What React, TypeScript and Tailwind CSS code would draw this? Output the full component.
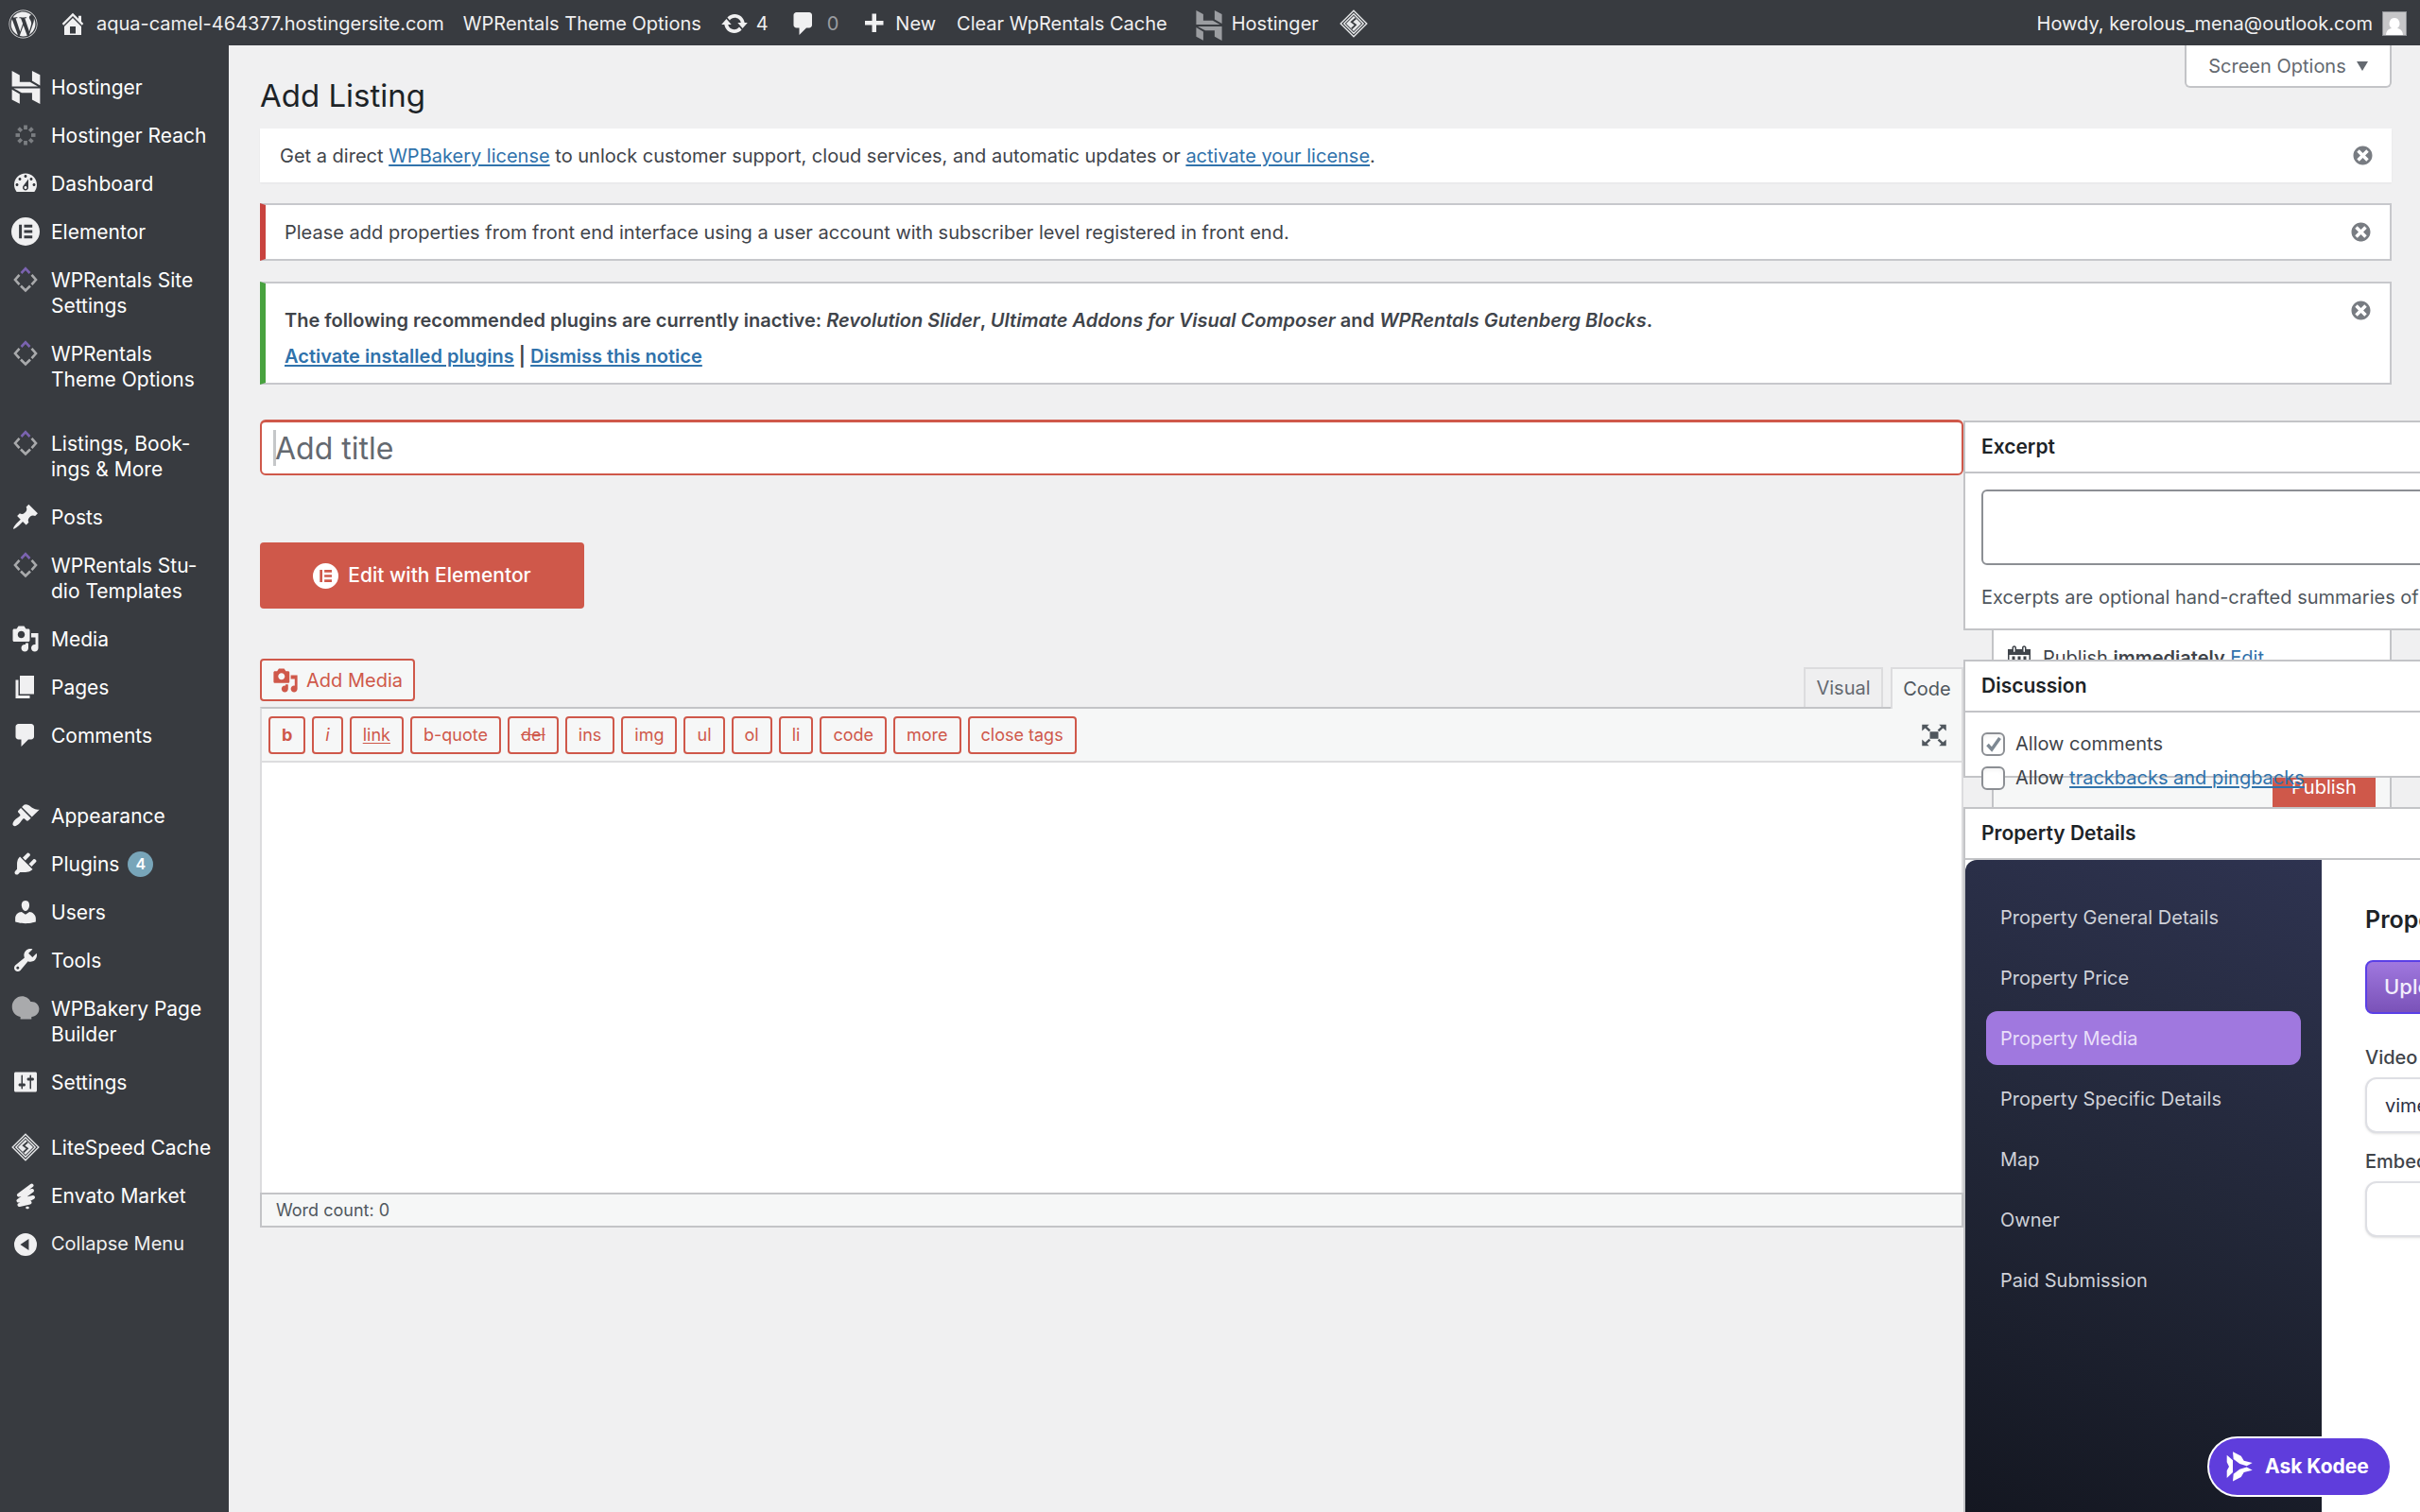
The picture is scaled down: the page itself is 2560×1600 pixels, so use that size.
import type { ReactNode } from "react";
import { FaWordpress } from "react-icons/fa";

// 20x20 admin icon set
const icons = {
  home: "M16 8.5l1.53 1.53-1.06 1.06L10 4.6l-6.47 6.49-1.06-1.06L10 2.5l4 4v-2h2v4zm-6-2.46l6 5.99V18H4v-5.97zM12 17v-5H8v5h4z",
  update:
    "M10.2 3.28c3.53 0 6.43 2.61 6.92 6h2.08l-3.5 4-3.5-4h2.32c-.45-1.97-2.21-3.45-4.32-3.45-1.45 0-2.73.71-3.54 1.78L4.95 5.66C6.23 4.2 8.11 3.28 10.2 3.28zm-.4 13.44c-3.52 0-6.43-2.61-6.92-6H.8l3.5-4c1.17 1.33 2.33 2.67 3.5 4H5.48c.45 1.97 2.21 3.45 4.32 3.45 1.45 0 2.73-.71 3.54-1.78l1.71 1.95c-1.28 1.46-3.15 2.38-5.25 2.38z",
  comments: "M5 2h9c1.1 0 2 .9 2 2v7c0 1.1-.9 2-2 2h-2l-5 5v-5H5c-1.1 0-2-.9-2-2V4c0-1.1.9-2 2-2z",
  plus: "M17 8v3h-5v5H9v-5H4V8h5V3h3v5h5z",
  dashboard:
    "M3.76 16h12.48c1.1-1.37 1.76-3.11 1.76-5 0-4.42-3.58-8-8-8s-8 3.58-8 8c0 1.89.66 3.63 1.76 5zM10 4c.55 0 1 .45 1 1s-.45 1-1 1-1-.45-1-1 .45-1 1-1zM6 6c.55 0 1 .45 1 1s-.45 1-1 1-1-.45-1-1 .45-1 1-1zm8 0c.55 0 1 .45 1 1s-.45 1-1 1-1-.45-1-1 .45-1 1-1zm-5.37 5.55L12 7v6c0 1.1-.9 2-2 2s-2-.9-2-2c0-.57.24-1.08.63-1.45zM4 10c.55 0 1 .45 1 1s-.45 1-1 1-1-.45-1-1 .45-1 1-1zm12 0c.55 0 1 .45 1 1s-.45 1-1 1-1-.45-1-1 .45-1 1-1zm-5 3c0-.55-.45-1-1-1s-1 .45-1 1 .45 1 1 1 1-.45 1-1z",
  post: "M10.44 3.02l1.82-1.82 6.36 6.35-1.83 1.82c-1.05-.68-2.48-.57-3.41.36l-.75.75c-.92.93-1.04 2.35-.35 3.41l-1.83 1.82-2.41-2.41-2.8 2.79c-.42.42-3.38 2.71-3.8 2.29s1.86-3.39 2.28-3.81l2.79-2.79L4.1 9.36l1.83-1.82c1.05.69 2.48.57 3.4-.36l.75-.75c.93-.92 1.05-2.35.36-3.41z",
  media:
    "M13 11V4c0-.55-.45-1-1-1h-1.67L9 1H5L3.67 3H2c-.55 0-1 .45-1 1v7c0 .55.45 1 1 1h10c.55 0 1-.45 1-1zM7 4.5c1.38 0 2.5 1.12 2.5 2.5S8.38 9.5 7 9.5 4.5 8.38 4.5 7 5.62 4.5 7 4.5zM14 6h5v10.5c0 1.38-1.12 2.5-2.5 2.5S14 17.88 14 16.5s1.12-2.5 2.5-2.5c.17 0 .34.02.5.05V9h-3V6zm-4 8.05V13h2v3.5c0 1.38-1.12 2.5-2.5 2.5S7 17.88 7 16.5 8.12 14 9.5 14c.17 0 .34.02.5.05z",
  page: "M6 15V2h10v13H6zm-1 1h8v2H3V5h2v11z",
  appearance:
    "M14.48 11.06L7.41 3.99l1.5-1.5c.5-.56 2.3-.47 3.51.32 1.21.8 1.43 1.28 2.91 2.1 1.18.64 2.45 1.26 4.45.85zm-.71.71L6.7 4.7 4.93 6.47c-.39.39-.39 1.02 0 1.41l1.06 1.06c.39.39.39 1.03 0 1.42-.6.6-1.43 1.11-2.21 1.69-.35.26-.7.53-1.01.84C1.43 14.23.4 16.08 1.4 17.07c.99 1 2.84-.03 4.18-1.36.31-.31.58-.66.85-1.02.57-.78 1.08-1.61 1.69-2.21.39-.39 1.02-.39 1.41 0l1.06 1.06c.39.39 1.02.39 1.41 0z",
  plugins:
    "M13.11 4.36L9.87 7.6 8 5.73l3.24-3.24c.35-.34 1.05-.2 1.56.32.52.51.66 1.21.31 1.55zm-8 1.77l.91-1.12 9.01 9.01-1.19.84c-.71.71-2.63 1.16-3.82 1.16H6.14L4.9 17.26c-.59.59-1.54.59-2.12 0-.59-.58-.59-1.53 0-2.12l1.24-1.24v-3.88c0-1.13.4-3.19 1.09-3.89zm7.26 3.97l3.24-3.24c.34-.35 1.04-.21 1.55.31.52.51.66 1.21.31 1.55l-3.24 3.25z",
  users:
    "M10 9.25c-2.27 0-2.73-3.44-2.73-3.44C7 4.02 7.82 2 9.97 2c2.16 0 2.98 2.02 2.71 3.81 0 0-.41 3.44-2.68 3.44zm0 2.57L12.72 10c2.39 0 4.52 2.33 4.52 4.53v2.49s-3.65 1.13-7.24 1.13c-3.65 0-7.24-1.13-7.24-1.13v-2.49c0-2.25 1.94-4.48 4.47-4.48z",
  tools:
    "M16.68 9.77c-1.34 1.34-3.3 1.67-4.95.99l-5.41 6.52c-.99.99-2.59.99-3.58 0s-.99-2.59 0-3.57l6.52-5.42c-.68-1.65-.35-3.61.99-4.95 1.28-1.28 3.12-1.62 4.72-1.06l-2.89 2.89 2.82 2.82 2.86-2.87c.53 1.58.18 3.39-1.08 4.65zM3.81 16.21c.4.39 1.04.39 1.43 0 .4-.4.4-1.04 0-1.43-.39-.4-1.03-.4-1.43 0-.39.39-.39 1.03 0 1.43z",
  settings:
    "M18 16V4c0-.55-.45-1-1-1H3c-.55 0-1 .45-1 1v12c0 .55.45 1 1 1h14c.55 0 1-.45 1-1zM8 11h1c.55 0 1 .45 1 1s-.45 1-1 1H8v1.5c0 .28-.22.5-.5.5s-.5-.22-.5-.5V13H6c-.55 0-1-.45-1-1s.45-1 1-1h1V5.5c0-.28.22-.5.5-.5s.5.22.5.5V11zm5-2h-1c-.55 0-1-.45-1-1s.45-1 1-1h1V5.5c0-.28.22-.5.5-.5s.5.22.5.5V7h1c.55 0 1 .45 1 1s-.45 1-1 1h-1v5.5c0 .28-.22.5-.5.5s-.5-.22-.5-.5V9z",
  collapse: "M10 2a8 8 0 1 0 0 16 8 8 0 0 0 0-16zM12.3 6v8L6.3 10z",
  dismiss:
    "M10 2c4.42 0 8 3.58 8 8s-3.58 8-8 8-8-3.58-8-8 3.58-8 8-8zm5 11l-3-3 3-3-2-2-3 3-3-3-2 2 3 3-3 3 2 2 3-3 3 3z",
  calendar:
    "M15 4h3v14H2V4h3V3c0-.83.67-1.5 1.5-1.5S8 2.17 8 3v1h4V3c0-.83.67-1.5 1.5-1.5S15 2.17 15 3v1zM6 3v2.5c0 .28.22.5.5.5s.5-.22.5-.5V3c0-.28-.22-.5-.5-.5S6 2.72 6 3zm7 0v2.5c0 .28.22.5.5.5s.5-.22.5-.5V3c0-.28-.22-.5-.5-.5s-.5.22-.5.5zm4 14V8H3v9h14zM7 16V9H5v7h2zm4 0V9H9v7h2zm4 0V9h-2v7h2z",
  elementor:
    "M10 0a10 10 0 1 0 0 20 10 10 0 0 0 0-20zM5.4 5.2h2v9.600h-2zM9 5.200h5.800v2H9zM9 9h5.800v2H9zM9 12.800h5.800v2H9z",
  bakery:
    "M7.5 1.5c2.7 0 5 1.5 6.1 3.8 3.4-.3 6 2.1 6 5.1 0 3.3-2.500 5.600-5.400 5.600v1.700H6.400v-1.700C3 15.600.5 12.600.5 8.900.5 4.800 3.600 1.500 7.500 1.500z",
  expand:
    "M7 7.500h6v5H7zM1.500 2.500h5L5 4l2.600 2.300-1.200 1.200L3.700 5 1.500 7zM18.500 2.500h-5L15 4l-2.600 2.300 1.200 1.200L16.300 5l2.200 2zM1.500 17.500h5L5 16l2.600-2.300-1.200-1.200L3.700 15l-2.200-2zM18.500 17.500h-5L15 16l-2.600-2.300 1.200-1.200 2.700 2.500 2.200-2z",
};

function Icon({ name, className = "size-[30px]" }: { name: keyof typeof icons; className?: string }) {
  return (
    <svg viewBox="0 0 20 20" fill="currentColor" fillRule="evenodd" className={`shrink-0 ${className}`} aria-hidden="true">
      <path d={icons[name]} />
    </svg>
  );
}

function HostingerIcon({ className }: { className: string }) {
  return (
    <svg viewBox="0 0 24 24" fill="currentColor" className={`shrink-0 ${className}`} aria-hidden="true">
      <path d="M16.415 0v7.16l5.785 3.384V2.949L16.415 0M1.8 0v11.237h18.815L14.89 8.09l-7.457-.003V3.024L1.8 0M16.415 20.894v-5.019l-7.514-.005c.007.033-5.82-3.197-5.82-3.197l19.119.091V24l-5.785-3.106M1.8 13.551v7.343l5.633 2.949v-6.988L1.8 13.551" />
    </svg>
  );
}

function ReachIcon() {
  return (
    <svg viewBox="0 0 30 30" className="size-[30px] shrink-0" stroke="#7b7e82" strokeWidth="3.800" aria-hidden="true">
      {[0, 45, 90, 135, 180, 225, 270, 315].map((a) => (
        <path key={a} d="M15 4.500v4.500" transform={`rotate(${a} 15 15)`} />
      ))}
    </svg>
  );
}

function RentalsIcon() {
  return (
    <svg viewBox="0 0 30 30" className="size-[30px] shrink-0" fill="none" strokeWidth="2.600" aria-hidden="true">
      <path d="M10.500 8L15 3.200 19.500 8" stroke="#7b63b0" />
      <path d="M8.500 9.800L4 15l4.500 5.200" stroke="#a9aaac" />
      <path d="M21.500 9.800L26 15l-4.500 5.200" stroke="#a9aaac" />
      <path d="M10 21.500l5 5 5-5" stroke="#a9aaac" />
    </svg>
  );
}

function LiteSpeedIcon() {
  return (
    <svg viewBox="0 0 30 30" className="size-[30px] shrink-0" fill="none" stroke="#e6e7e9" aria-hidden="true">
      <path d="M15 1.200L28.800 15 15 28.800 1.200 15z" strokeWidth="1.400" />
      <path d="M15 4.800L25.200 15 15 25.200 4.800 15z" strokeWidth="1.400" />
      <path d="M15 7L23 15 15 23 7 15z" fill="#e6e7e9" stroke="none" />
      <path d="M17.200 9.500L12.800 13.200l4.200 3.200-4.200 4" stroke="#383b40" strokeWidth="1.800" />
    </svg>
  );
}

function EnvatoIcon() {
  return (
    <svg viewBox="0 0 30 30" className="size-[30px] shrink-0" fill="none" stroke="#f0f0f1" strokeLinecap="round" strokeLinejoin="round" aria-hidden="true">
      <path d="M21.500 4.500L8 14.500l14-4.500L7.500 20.500 23 17 8.500 25l11-2.500" strokeWidth="4" />
      <path d="M16.500 28h1" strokeWidth="2.500" />
    </svg>
  );
}

type Item = { label: string; icon: ReactNode; badge?: string };

const menu: Item[][] = [
  [
    { label: "Hostinger", icon: <HostingerIcon className="size-[35px]" /> },
    { label: "Hostinger Reach", icon: <ReachIcon /> },
    { label: "Dashboard", icon: <Icon name="dashboard" /> },
    { label: "Elementor", icon: <Icon name="elementor" /> },
    { label: "WPRentals Site\nSettings", icon: <RentalsIcon /> },
    { label: "WPRentals\nTheme Options", icon: <RentalsIcon /> },
  ],
  [
    { label: "Listings, Book-\nings & More", icon: <RentalsIcon /> },
    { label: "Posts", icon: <Icon name="post" /> },
    { label: "WPRentals Stu-\ndio Templates", icon: <RentalsIcon /> },
    { label: "Media", icon: <Icon name="media" /> },
    { label: "Pages", icon: <Icon name="page" /> },
    { label: "Comments", icon: <Icon name="comments" /> },
  ],
  [
    { label: "Appearance", icon: <Icon name="appearance" /> },
    { label: "Plugins", icon: <Icon name="plugins" />, badge: "4" },
    { label: "Users", icon: <Icon name="users" /> },
    { label: "Tools", icon: <Icon name="tools" /> },
    {
      label: "WPBakery Page\nBuilder",
      icon: <Icon name="bakery" className="size-[30px] text-[#a9aaac]" />,
    },
    { label: "Settings", icon: <Icon name="settings" /> },
  ],
  [
    { label: "LiteSpeed Cache", icon: <LiteSpeedIcon /> },
    { label: "Envato Market", icon: <EnvatoIcon /> },
  ],
];

const groupSpacing = ["", "mt-[17px]", "mt-[34px]", "mt-[18px]"];

function AdminBar() {
  return (
    <header className="flex h-12 shrink-0 items-center justify-between bg-[#383b40] pl-[9px] pr-3.5 pt-0.5 text-[20px] text-[#f0f0f1]">
      <nav className="flex items-center whitespace-nowrap">
        <a href="#" aria-label="WordPress">
          <FaWordpress className="size-[31px]" />
        </a>
        <a href="#" className="ml-[22px] flex items-center gap-[10px]">
          <Icon name="home" />
          aqua-camel-464377.hostingersite.com
        </a>
        <a href="#" className="ml-5">WPRentals Theme Options</a>
        <a href="#" className="ml-5 flex items-center gap-2">
          <Icon name="update" />4
        </a>
        <a href="#" className="ml-[22px] flex items-center gap-[10px]">
          <Icon name="comments" />
          <span className="text-[#9b9da1]">0</span>
        </a>
        <a href="#" className="ml-[22px] flex items-center gap-2">
          <Icon name="plus" />
          New
        </a>
        <a href="#" className="ml-[22px]">Clear WpRentals Cache</a>
        <a href="#" className="ml-7 flex items-center gap-2">
          <HostingerIcon className="mt-1 size-[32px] text-[#9b9da1]" />
          Hostinger
        </a>
        <a href="#" className="ml-[22px]" aria-label="LiteSpeed Cache">
          <LiteSpeedIcon />
        </a>
      </nav>
      <a href="#" className="flex items-center gap-[10px] whitespace-nowrap">
        Howdy, kerolous_mena@outlook.com
        <svg viewBox="0 0 26 26" className="size-[26px]" aria-hidden="true">
          <rect width="26" height="26" fill="#8c8f94" />
          <rect x="1" y="1" width="24" height="24" fill="#c6c6c8" />
          <path d="M13 7a5.500 6 0 0 1 3 11c3.500.5 5.500 2.500 6 7H4c.5-4.500 2.500-6.500 6-7a5.500 6 0 0 1 3-11z" fill="#fff" />
        </svg>
      </a>
    </header>
  );
}

function Sidebar() {
  return (
    <aside className="w-[242px] shrink-0 bg-[#383b40] pt-[19px] text-[21px] leading-[27px] text-white">
      {menu.map((group, i) => (
        <ul key={i} className={groupSpacing[i]}>
          {group.map((item) => (
            <li key={item.label}>
              <a href="#" className="flex gap-3 py-3 pl-3">
                <span className="-my-0.5 flex h-[30px] w-[30px] shrink-0 items-center justify-center text-[#f0f0f1]">{item.icon}</span>
                <span className="whitespace-pre">{item.label}</span>
                {item.badge && (
                  <span className="-ml-[3px] flex size-[27px] items-center justify-center rounded-full bg-[#78a5b9] text-[16px] font-semibold">
                    {item.badge}
                  </span>
                )}
              </a>
            </li>
          ))}
        </ul>
      ))}
      <button className="flex items-center gap-3 py-3 pl-3 text-[20px] text-[#f0f0f1]">
        <Icon name="collapse" className="-my-0.5 size-[30px]" />
        Collapse Menu
      </button>
    </aside>
  );
}

function DismissButton() {
  return (
    <button aria-label="Dismiss this notice" className="shrink-0 text-[#787c82]">
      <Icon name="dismiss" className="size-[25px]" />
    </button>
  );
}

const linkClass = "text-[#3072ab] underline underline-offset-2";

function Notices() {
  return (
    <section className="mr-[30px] flex flex-col gap-[22px] text-[20px] text-[#3f444a]">
      <div className="flex h-[57px] items-center justify-between bg-white pl-[21px] pr-[18px] shadow-xs">
        <p>
          Get a direct <a href="#" className={linkClass}>WPBakery license</a> to unlock customer support, cloud services, and automatic updates or{" "}
          <a href="#" className={linkClass}>activate your license</a>.
        </p>
        <DismissButton />
      </div>
      <div className="flex h-[61px] items-center justify-between border-2 border-l-[6px] border-[#c7c8cc] border-l-[#c9433f] bg-white pl-5 pr-[18px]">
        <p>Please add properties from front end interface using a user account with subscriber level registered in front end.</p>
        <DismissButton />
      </div>
      <div className="flex h-[109px] items-start justify-between border-2 border-l-[6px] border-[#c7c8cc] border-l-[#48a23f] bg-white pl-5 pr-[18px] pt-4 font-semibold">
        <div className="pt-1 leading-[38px]">
          <p>
            The following recommended plugins are currently inactive: <em>Revolution Slider</em>, <em>Ultimate Addons for Visual Composer</em> and{" "}
            <em>WPRentals Gutenberg Blocks</em>.
          </p>
          <p>
            <a href="#" className={linkClass}>Activate installed plugins</a> | <a href="#" className={linkClass}>Dismiss this notice</a>
          </p>
        </div>
        <DismissButton />
      </div>
    </section>
  );
}

const quicktags = ["b", "i", "link", "b-quote", "del", "ins", "img", "ul", "ol", "li", "code", "more", "close tags"];

const tagStyle: Record<string, string> = {
  b: "font-bold",
  i: "italic",
  link: "underline underline-offset-2",
  del: "line-through",
};

function Editor() {
  return (
    <section className="flex min-w-0 flex-1 flex-col">
      <div className="relative">
        <input
          type="text"
          aria-label="Add title"
          placeholder="Add title"
          className="block h-[59px] w-full rounded-md border-2 border-t-[3px] border-[#cf584a] bg-white px-[14px] text-[32px] outline-none placeholder:text-[#646970]"
        />
        <span className="absolute left-[14px] top-[11px] h-[38px] w-[3px] bg-[#8c8f94]/50" />
      </div>
      <button className="mt-[71px] flex h-[70px] w-[343px] items-center justify-center gap-[10px] rounded bg-[#cf584a] text-[21px] font-medium text-white">
        <Icon name="elementor" className="size-[27px]" />
        Edit with Elementor
      </button>
      <div className="mt-[53px] flex h-[51px] items-end justify-between">
        <button className="flex h-[45px] items-center gap-2 self-start rounded border-2 border-[#cf584a] bg-[#f6f7f7] px-[11px] text-[20px] text-[#cf584a]">
          <Icon name="media" className="size-[28px]" />
          Add Media
        </button>
        <div className="flex items-end gap-2 text-[20px] text-[#646970]">
          <button className="h-[42px] w-[84px] border-2 border-b-0 border-[#dcdcde] bg-[#efeff0]">Visual</button>
          <button className="relative -mb-0.5 h-11 w-[77px] border-2 border-b-0 border-[#dcdcde] bg-[#f6f7f7] text-[#50575e]">Code</button>
        </div>
      </div>
      <div className="border-2 border-[#dcdcde] border-t-[#c3c4c7] bg-white">
        <div className="flex h-[57px] items-center justify-between border-b-2 border-[#dcdcde] bg-[#f6f7f7] pl-[7px] pr-[14px]">
          <div className="flex gap-[7px]">
            {quicktags.map((tag) => (
              <button
                key={tag}
                className={`h-10 rounded border-2 border-[#cf584a] px-3 text-[18px] text-[#cf584a] ${tagStyle[tag] ?? ""}`}
              >
                {tag}
              </button>
            ))}
          </div>
          <button aria-label="Distraction-free writing mode" className="text-[#50575e]">
            <Icon name="expand" />
          </button>
        </div>
        <textarea aria-label="Content" className="block h-[455px] w-full resize-none outline-none" />
      </div>
      <div className="-mt-0.5 flex h-[37px] items-center border-2 border-[#c3c4c7] bg-[#f6f7f7] pl-[15px] text-[18px] text-[#50575e]">
        Word count: 0
      </div>
    </section>
  );
}

function MetaBox({ title, className, children }: { title: string; className: string; children: ReactNode }) {
  return (
    <section className={`relative border-2 border-r-0 border-[#c3c4c7] bg-white ${className}`}>
      <h2 className="flex h-[54px] items-center border-b-2 border-[#c3c4c7] pl-[17px] text-[21px] font-semibold text-[#1d2327]">{title}</h2>
      {children}
    </section>
  );
}

const tabs = ["Property General Details", "Property Price", "Property Media", "Property Specific Details", "Map", "Owner", "Paid Submission"];

const fieldClass = "block h-[59px] w-[300px] appearance-none rounded-xl border-2 border-[#dedfe4] bg-white px-[19px] text-[20px] text-[#2c3044] shadow-sm outline-none";

function PropertyDetails() {
  return (
    <div className="flex flex-1">
      <nav className="flex w-[377px] shrink-0 flex-col gap-[7px] rounded-tl-xl bg-[linear-gradient(20deg,#141721_0%,#222738_50%,#2e3350_100%)] px-[22px] pt-8 text-[20px] text-[#cfd1d8]">
        {tabs.map((tab) => (
          <a
            key={tab}
            href="#"
            className={`flex h-[57px] items-center rounded-xl px-[15px] ${tab === "Property Media" ? "bg-[#a078df] text-[#e9defa]" : ""}`}
          >
            {tab}
          </a>
        ))}
      </nav>
      <div className="min-w-0 flex-1 overflow-hidden whitespace-nowrap pl-[46px] pt-[47px]">
        <h3 className="text-[25px] font-semibold leading-8 text-[#1d2327]">Property</h3>
        <button className="mt-[27px] block h-[57px] w-[300px] rounded-lg border-2 border-[#5a3fe6] bg-linear-to-b from-[#a078df] to-[#7a52b8] px-[18px] text-left text-[22px] font-medium text-[#f3edfc]">
          Upload
        </button>
        <label htmlFor="video" className="mt-[33px] block text-[20px] font-medium leading-[26px] text-[#3f444a]">Video</label>
        <select id="video" className={`mt-2 ${fieldClass}`}>
          <option>vimeo</option>
        </select>
        <label htmlFor="embed" className="mt-[17px] block text-[20px] font-medium leading-[26px] text-[#3f444a]">Embed</label>
        <input id="embed" type="text" className={`mt-2 ${fieldClass}`} />
      </div>
    </div>
  );
}

function PublishBox() {
  return (
    <section className="absolute left-[30px] right-[30px] top-[194px] border-2 border-[#c3c4c7] bg-white text-[20px] text-[#3f444a]">
      <div className="flex h-[110px] items-center gap-[10px] whitespace-pre pl-3">
        <Icon name="calendar" className="size-[30px] text-[#3f444a]" />
        <p>
          Publish <b className="font-semibold">immediately</b> <a href="#" className="text-[#3072ab]">Edit</a>
        </p>
      </div>
      <div className="mt-[43px] flex h-[76px] items-center justify-end border-t-2 border-[#dcdcde] bg-[#f6f7f7] pr-[15px]">
        <button className="h-[45px] w-[109px] bg-[#cf584a] text-white">Publish</button>
      </div>
    </section>
  );
}

const checkClass = "peer size-[25px] appearance-none rounded-md border-2 border-[#8c8f94] bg-white shadow-inner";

function SideColumn() {
  return (
    <div className="relative mt-px flex w-[483px] shrink-0 flex-col gap-[31px]">
      <PublishBox />
      <MetaBox title="Excerpt" className="h-[222px]">
        <div className="overflow-hidden whitespace-nowrap pl-[17px] pt-[17px]">
          <textarea aria-label="Excerpt" className="block h-20 w-[700px] resize-none rounded-md border-2 border-[#8c8f94] bg-white outline-none" />
          <p className="mt-[19px] text-[20px] leading-[30px] text-[#50575e]">Excerpts are optional hand-crafted summaries of</p>
        </div>
      </MetaBox>
      <MetaBox title="Discussion" className="h-[125px]">
        <div className="flex flex-col gap-[6px] pl-[17px] pt-[18px] text-[20px] leading-[30px] text-[#3f444a]">
          <label className="flex items-center gap-[11px]">
            <span className="relative flex">
              <input type="checkbox" defaultChecked className={checkClass} />
              <svg viewBox="0 0 25 25" className="absolute inset-0 hidden size-[25px] peer-checked:block" fill="none" stroke="#7e8993" strokeWidth="3.500" aria-hidden="true">
                <path d="M6.500 13l4.500 5 8.500-12" />
              </svg>
            </span>
            Allow comments
          </label>
          <label className="flex items-center gap-[11px]">
            <input type="checkbox" className={checkClass} />
            <span>
              Allow <a href="#" className={linkClass}>trackbacks and pingbacks</a>
            </span>
          </label>
        </div>
      </MetaBox>
      <MetaBox title="Property Details" className="flex flex-1 flex-col border-b-0">
        <PropertyDetails />
      </MetaBox>
    </div>
  );
}

export default function App() {
  return (
    <div className="flex min-h-screen flex-col overflow-hidden bg-[#f0f0f1] font-[Inter,sans-serif]">
      <AdminBar />
      <div className="flex flex-1">
        <Sidebar />
        <main className="flex min-w-0 flex-1 flex-col pl-[33px]">
          <div className="flex h-[88px] items-start justify-between pr-[30px]">
            <h1 className="pt-[30px] text-[33px] leading-[46px] text-[#1d2327]">Add Listing</h1>
            <button className="flex h-[45px] w-[219px] items-center justify-center gap-[11px] rounded-b-md border-2 border-t-0 border-[#c3c4c7] bg-white text-[20px] text-[#646970]">
              Screen Options
              <svg viewBox="0 0 12 10" className="h-[10px] w-3" fill="currentColor" aria-hidden="true">
                <path d="M0 0h12L6 10z" />
              </svg>
            </button>
          </div>
          <Notices />
          <div className="mt-[37px] flex flex-1">
            <Editor />
            <SideColumn />
          </div>
        </main>
      </div>
      <button className="fixed bottom-4 right-[30px] flex h-16 w-[195px] items-center gap-[13px] rounded-full border-2 border-white bg-[#5f3ddc] pl-[18px] text-[21px] font-bold text-white">
        <svg viewBox="0 0 28 32" className="h-8 w-7" fill="currentColor" aria-hidden="true">
          <path d="M.7 3.700L7 9.300V22L.7 28v-7.700L3 16 .7 11.300zM7 .3l8.700 4.400 3 5 9 2.300-6 3.300-7.400-2.300-6.600-5zM7 31.400l8.700-4.400 3-5 9-2.300-6-3.300-7.400 2.300-6.600 5z" />
        </svg>
        Ask Kodee
      </button>
    </div>
  );
}
